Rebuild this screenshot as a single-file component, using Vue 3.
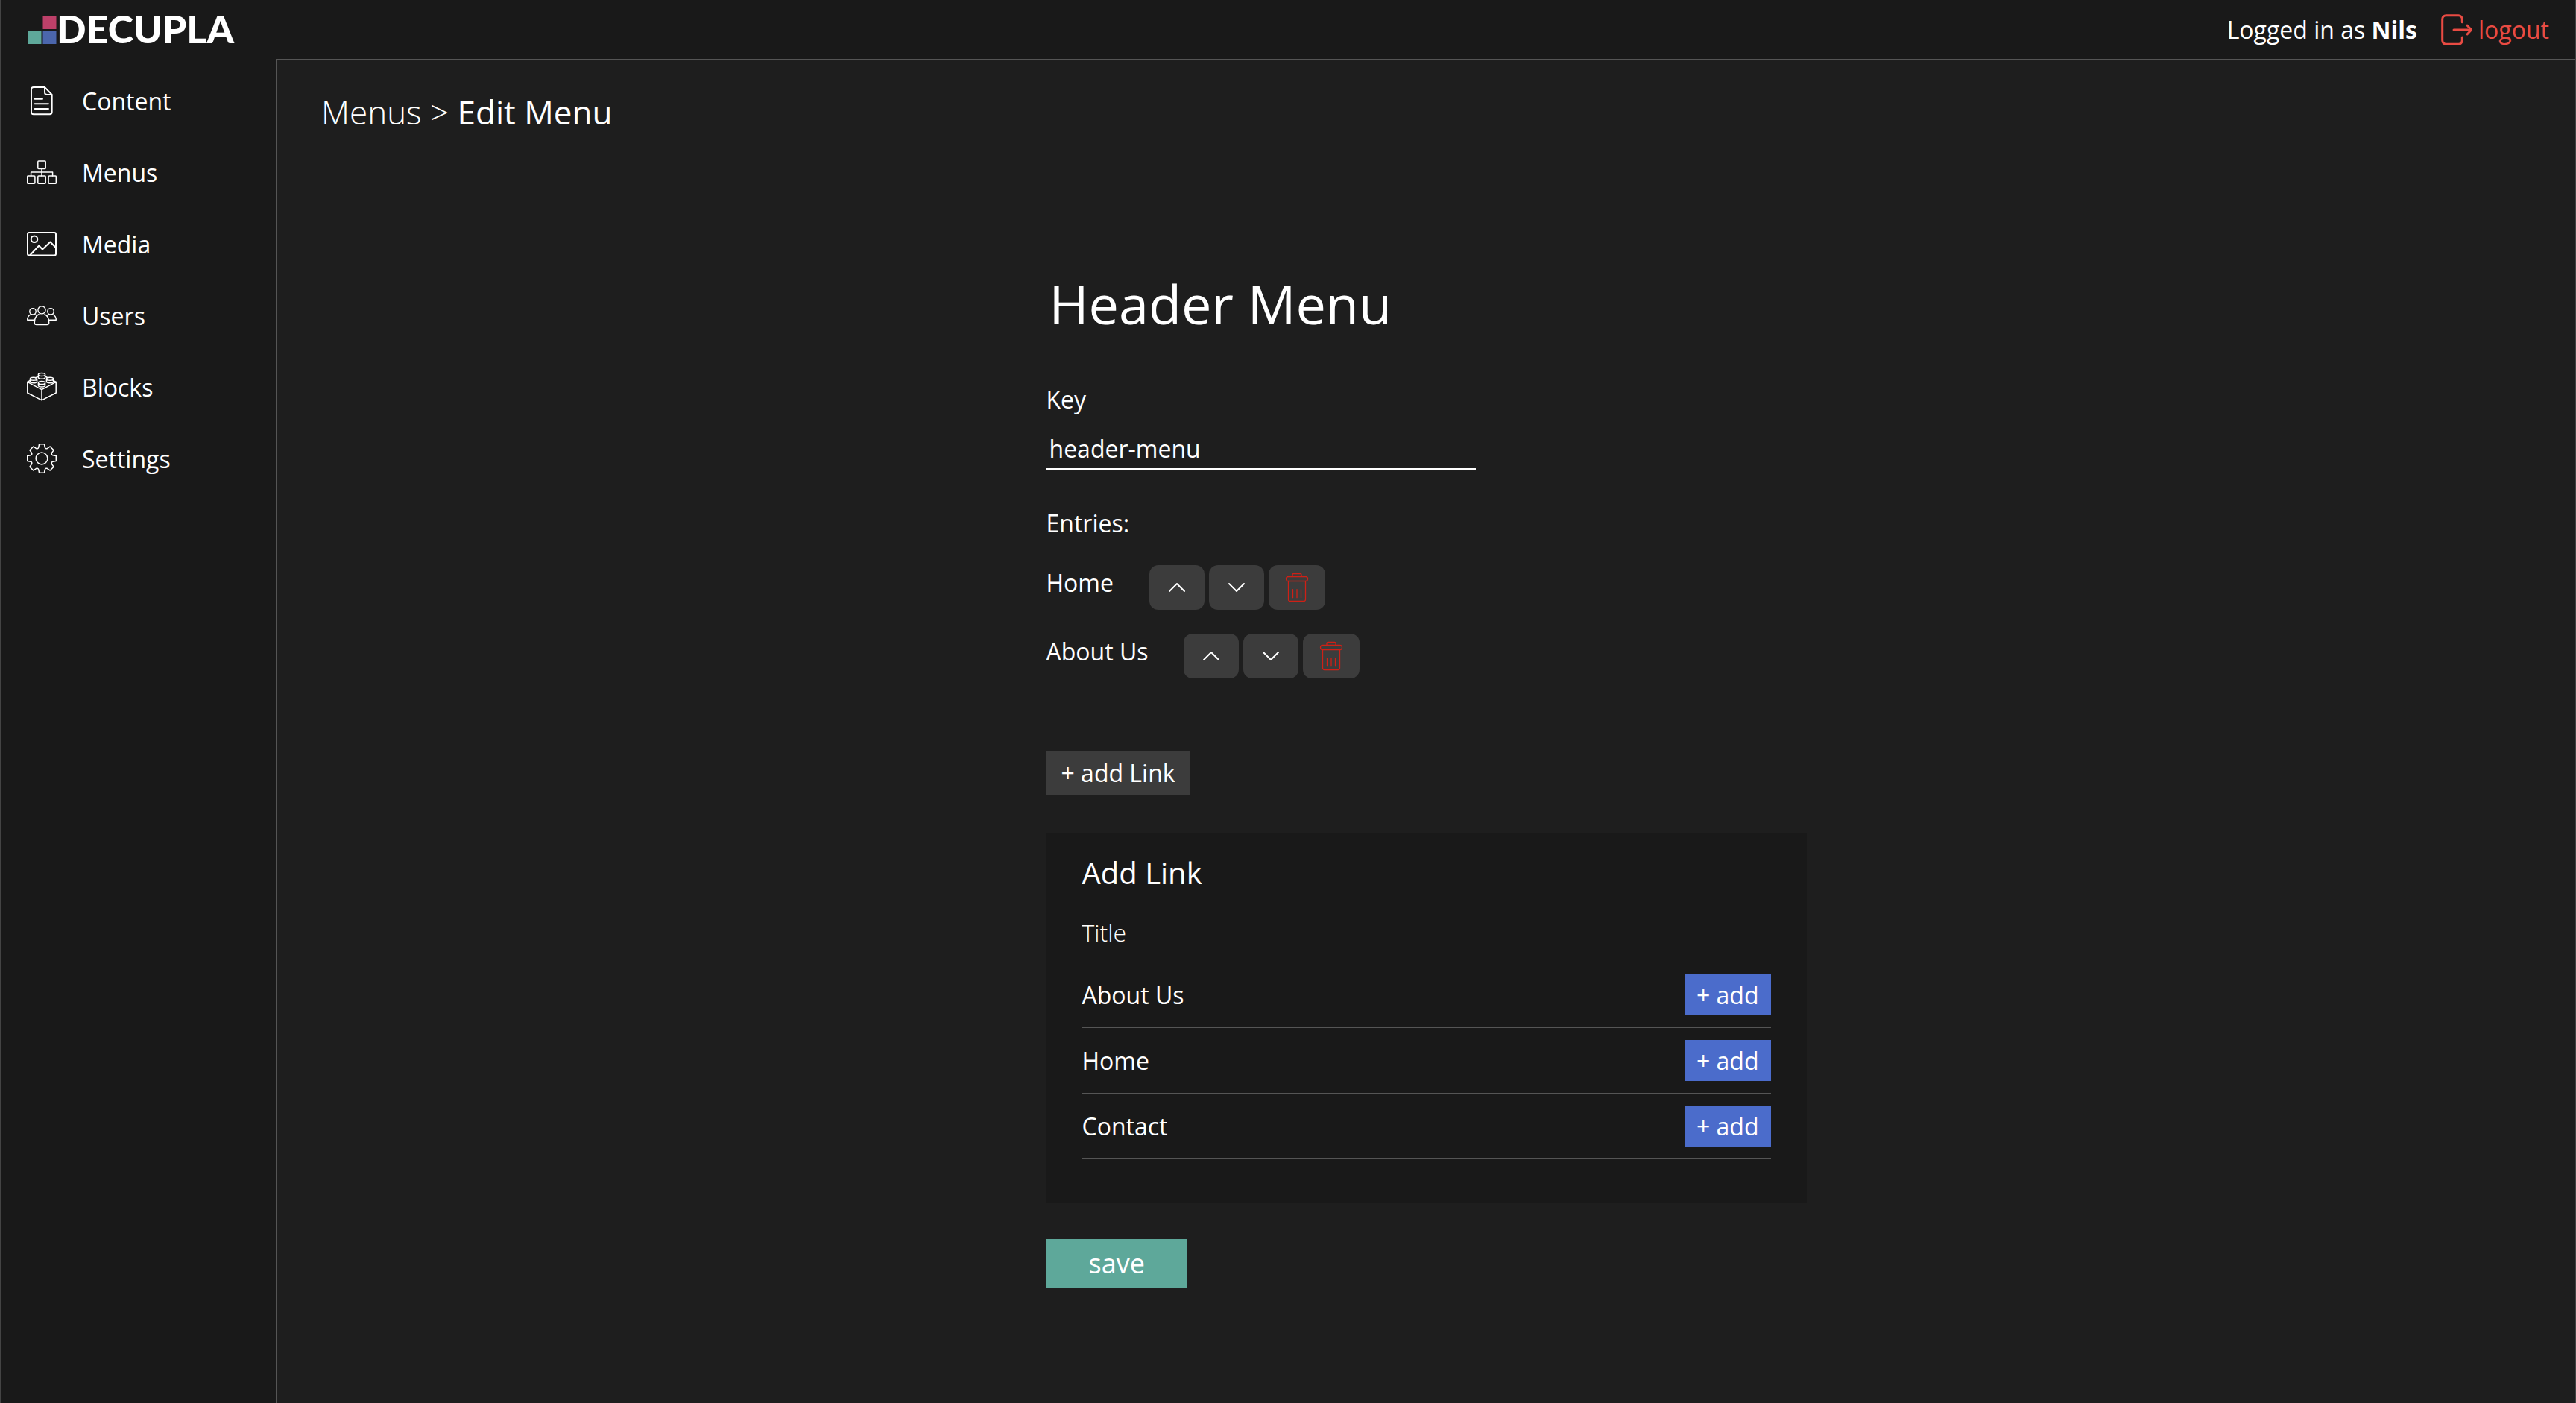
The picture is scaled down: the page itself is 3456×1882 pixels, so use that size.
<script setup>
import { ref } from 'vue'

const title = ref('Header Menu')
const key = ref('header-menu')
const entries = ref(['Home', 'About Us'])
const pages = ['About Us', 'Home', 'Contact']
const nav = ['Content', 'Menus', 'Media', 'Users', 'Blocks', 'Settings']

// Outline of an eight-toothed gear centred on 20,20
function gearPath() {
  const tooth = [[-5, -13.6], [-4.2, -15], [-3.4, -19.3], [3.4, -19.3], [4.2, -15], [5, -13.6]]
  const points = []
  for (let i = 0; i < 8; i++) {
    const a = (i * Math.PI) / 4
    for (const [x, y] of tooth) {
      const px = 20 + x * Math.cos(a) - y * Math.sin(a)
      const py = 20 + x * Math.sin(a) + y * Math.cos(a)
      points.push(px.toFixed(2) + ' ' + py.toFixed(2))
    }
  }
  return 'M' + points.join('L') + 'Z'
}
const gear = gearPath()
const studs = [[20, 3.6], [9, 9.2], [31, 9.2], [20, 14.4]]
</script>

<template>
  <div class="app">
    <header class="topbar">
      <a class="logo" href="#">
        <svg width="38" height="38" viewBox="0 0 38 38" aria-hidden="true">
          <rect x="19.5" y="1" width="18" height="17" fill="#bd4069" />
          <rect x="0" y="20" width="17.5" height="18" fill="#5ea89a" />
          <rect x="19.5" y="20" width="18" height="18" fill="#4b66ac" />
        </svg>
        <span>DECUPLA</span>
      </a>
      <div class="account">
        <span>Logged in as <strong>Nils</strong></span>
        <a class="logout" href="#">
          <svg width="42" height="42" viewBox="0 0 42 42" aria-hidden="true">
            <path d="M28.3 10.7V7A5 5 0 0 0 23.3 1.7H6.7A5 5 0 0 0 1.7 6.7V35.3A5 5 0 0 0 6.7 40.3H23.3A5 5 0 0 0 28.3 35.3V31M17 21H40M35 15L40.6 21L35 27" />
          </svg>
          <span>logout</span>
        </a>
      </div>
    </header>

    <div class="body">
      <nav class="sidebar">
        <a v-for="item in nav" :key="item" class="nav-item" href="#">
          <svg width="40" height="40" viewBox="0 0 40 40" aria-hidden="true">
            <g v-if="item === 'Content'" stroke-width="1.9">
              <path d="M24 2H9A3 3 0 0 0 6 5V35.3A3 3 0 0 0 9 38.3H30.7A3 3 0 0 0 33.7 35.3V12L24 2V9A3 3 0 0 0 27 12H33.7" />
              <path d="M10.7 17.7H21M10.7 24.3H29M10.7 31H29" />
            </g>
            <g v-else-if="item === 'Menus'" stroke-width="1.5">
              <rect x="14.8" y="5" width="10.4" height="10.4" rx="1" />
              <rect x="0.7" y="25" width="10.2" height="10.2" rx="1" />
              <rect x="14.8" y="25" width="10.4" height="10.2" rx="1" />
              <rect x="29.1" y="25" width="10.2" height="10.2" rx="1" />
              <path d="M20 15.4V25M5.6 25V20H34.6V25" />
            </g>
            <g v-else-if="item === 'Media'" stroke-width="2">
              <rect x="1" y="5" width="38" height="30.6" rx="2" />
              <circle cx="10" cy="13.7" r="4.3" />
              <path d="M4.5 35L16.3 22.5L21 27.5L31.4 17.5L39 25.3" />
            </g>
            <g v-else-if="item === 'Users'" stroke-width="1.4">
              <circle cx="20" cy="12.8" r="5.1" />
              <circle cx="8" cy="14.8" r="4.2" />
              <circle cx="32" cy="14.8" r="4.2" />
              <path d="M16 18.6C12 20.5 10.2 24.5 10.3 30Q10.4 32.6 13 32.6H27Q29.6 32.6 29.7 30C29.8 24.5 28 20.5 24 18.6" />
              <path d="M5.4 18.6C2.4 20 0.7 22.6 0.7 26.3H10.6M10.6 18.6Q12.4 19.4 13.4 20.6" />
              <path d="M34.6 18.6C37.6 20 39.3 22.6 39.3 26.3H29.4M29.4 18.6Q27.6 19.4 26.6 20.6" />
            </g>
            <g v-else-if="item === 'Blocks'" stroke-width="1.5">
              <path d="M4.5 11.3L0.8 13.3V28L20 37.8L39.2 28V13.3L35.5 11.3M0.8 13.3L20 23.6L39.2 13.3M20 23.6V37.8M15.3 6L11.5 8M24.7 6L28.5 8" />
              <path v-for="s in studs" :key="s.join()" :d="`M${s[0] - 4.6} ${s[1]}a4.6 2 0 0 1 9.2 0v3.6a4.6 2 0 0 1 -9.2 0zm0 0a4.6 2 0 0 0 9.2 0`" />
            </g>
            <g v-else stroke-width="1.5">
              <path :d="gear" />
              <circle cx="20" cy="20" r="7.9" />
            </g>
          </svg>
          <span>{{ item }}</span>
        </a>
      </nav>

      <main class="main">
        <div class="breadcrumb"><a href="#">Menus</a> &gt; <b>Edit Menu</b></div>

        <form class="form" @submit.prevent>
          <input v-model="title" class="title" type="text" aria-label="Menu title" />
          <label class="label" for="menu-key">Key</label>
          <input id="menu-key" v-model="key" class="key" type="text" />

          <p class="label entries-label">Entries:</p>
          <ul class="entries">
            <li v-for="entry in entries" :key="entry" class="entry">
              <span class="entry-name">{{ entry }}</span>
              <div class="actions">
                <button type="button" aria-label="Move up">
                  <svg width="24" height="24" viewBox="0 0 24 24"><path d="M2 17L12 7L22 17" /></svg>
                </button>
                <button type="button" aria-label="Move down">
                  <svg width="24" height="24" viewBox="0 0 24 24"><path d="M2 7L12 17L22 7" /></svg>
                </button>
                <button type="button" class="delete" aria-label="Delete">
                  <svg width="40" height="40" viewBox="0 0 40 40">
                    <path d="M14 5.5V3Q14 1.5 15.5 1.5H24.5Q26 1.5 26 3V5.5" />
                    <rect x="5.5" y="5.5" width="29" height="6" rx="3" />
                    <path d="M8.5 11.5V36Q8.5 38.5 11 38.5H29Q31.5 38.5 31.5 36V11.5M14.5 22.7V33.7M20 22.7V33.7M25.5 22.7V33.7" />
                  </svg>
                </button>
              </div>
            </li>
          </ul>

          <button type="button" class="add-link">+ add Link</button>

          <section class="panel">
            <h2>Add Link</h2>
            <table>
              <thead>
                <tr><th colspan="2" scope="col">Title</th></tr>
              </thead>
              <tbody>
                <tr v-for="page in pages" :key="page">
                  <td>{{ page }}</td>
                  <td class="cell-action"><button type="button" class="add">+ add</button></td>
                </tr>
              </tbody>
            </table>
          </section>

          <button type="submit" class="save">save</button>
        </form>
      </main>
    </div>
  </div>
</template>

<style>
body {
  margin: 0;
  background: #191919;
}
</style>

<style scoped>
.app {
  box-sizing: border-box;
  min-height: 100vh;
  display: flex;
  flex-direction: column;
  border: solid #444;
  border-width: 0 2px;
  background: #191919;
  color: #fff;
  font: 400 32px/44px "Open Sans", sans-serif;
}

a {
  color: inherit;
  text-decoration: none;
}

svg {
  display: block;
  flex: none;
  fill: none;
  stroke: currentColor;
  stroke-linecap: round;
  stroke-linejoin: round;
}

button,
input {
  box-sizing: border-box;
  border: 0;
  margin: 0;
  color: inherit;
  font: inherit;
}

.topbar {
  height: 79px;
  display: flex;
  align-items: center;
  justify-content: space-between;
  padding: 0 34px 0 36px;
}

.logo {
  display: flex;
  align-items: center;
  font: 900 52px/60px Lato, sans-serif;
}

.logo span {
  padding-bottom: 4px;
}

.logo svg {
  stroke: none;
}

.account,
.logout {
  display: flex;
  align-items: center;
}

.account {
  gap: 32px;
}

.logout {
  gap: 8px;
  color: #e94b43;
}

.logout svg {
  stroke-width: 3;
}

.body {
  flex: 1;
  display: flex;
}

.sidebar {
  flex: none;
  width: 368px;
  padding-top: 8px;
}

.nav-item {
  height: 96px;
  display: flex;
  align-items: center;
  gap: 34px;
  padding-left: 34px;
}

.nav-item span {
  padding-top: 2px;
}

.main {
  flex: 1;
  border: solid #555;
  border-width: 1px 0 0 1px;
  background: #1e1e1e;
  padding: 40px 58px 40px 60px;
}

.breadcrumb {
  font-size: 44px;
  font-weight: 300;
  line-height: 60px;
}

.breadcrumb b {
  font-weight: 400;
}

.form {
  max-width: 1020px;
  margin: 178px auto 0;
  display: flex;
  flex-direction: column;
  align-items: flex-start;
}

.title {
  width: 100%;
  height: 98px;
  padding: 0 4px;
  background: none;
  font-size: 72px;
  line-height: 98px;
}

.label {
  margin: 58px 0 0;
}

.key {
  width: 576px;
  height: 50px;
  margin-top: 22px;
  padding: 0 4px 6px;
  border-bottom: 2px solid #fff;
  background: none;
}

.entries-label {
  margin-top: 50px;
}

.entries {
  list-style: none;
  margin: 34px 0 97px;
  padding: 0;
  display: flex;
  flex-direction: column;
  gap: 32px;
}

.entry {
  display: flex;
  gap: 48px;
}

.entry-name {
  line-height: 48px;
}

.actions {
  display: flex;
  gap: 6px;
}

.actions button {
  width: 74px;
  height: 60px;
  display: flex;
  align-items: center;
  justify-content: center;
  padding: 0;
  border-radius: 12px;
  background: #3c3c3c;
  stroke-width: 2;
}

.actions .delete {
  width: 76px;
  color: #cf2016;
  stroke-width: 1.3;
}

.add-link {
  height: 60px;
  padding: 0 20px;
  background: #3c3c3c;
}

.panel {
  box-sizing: border-box;
  width: 100%;
  margin: 51px 0 48px;
  padding: 26px 48px 59px;
  background: #191919;
}

.panel h2 {
  margin: 0 0 31px;
  font-size: 40px;
  font-weight: 400;
  line-height: 54px;
}

table {
  width: 100%;
  border-spacing: 0;
}

th,
td {
  padding: 16px 0;
  border-bottom: 1px solid #555;
  text-align: left;
}

th {
  padding: 0 0 17px;
  font-weight: 300;
}

.cell-action {
  text-align: right;
}

.add {
  display: block;
  height: 55px;
  margin-left: auto;
  padding: 0 16px;
  background: #4b6ccb;
}

.save {
  height: 66px;
  padding: 0 57px;
  background: #5ea89a;
  font-size: 36px;
}
</style>
